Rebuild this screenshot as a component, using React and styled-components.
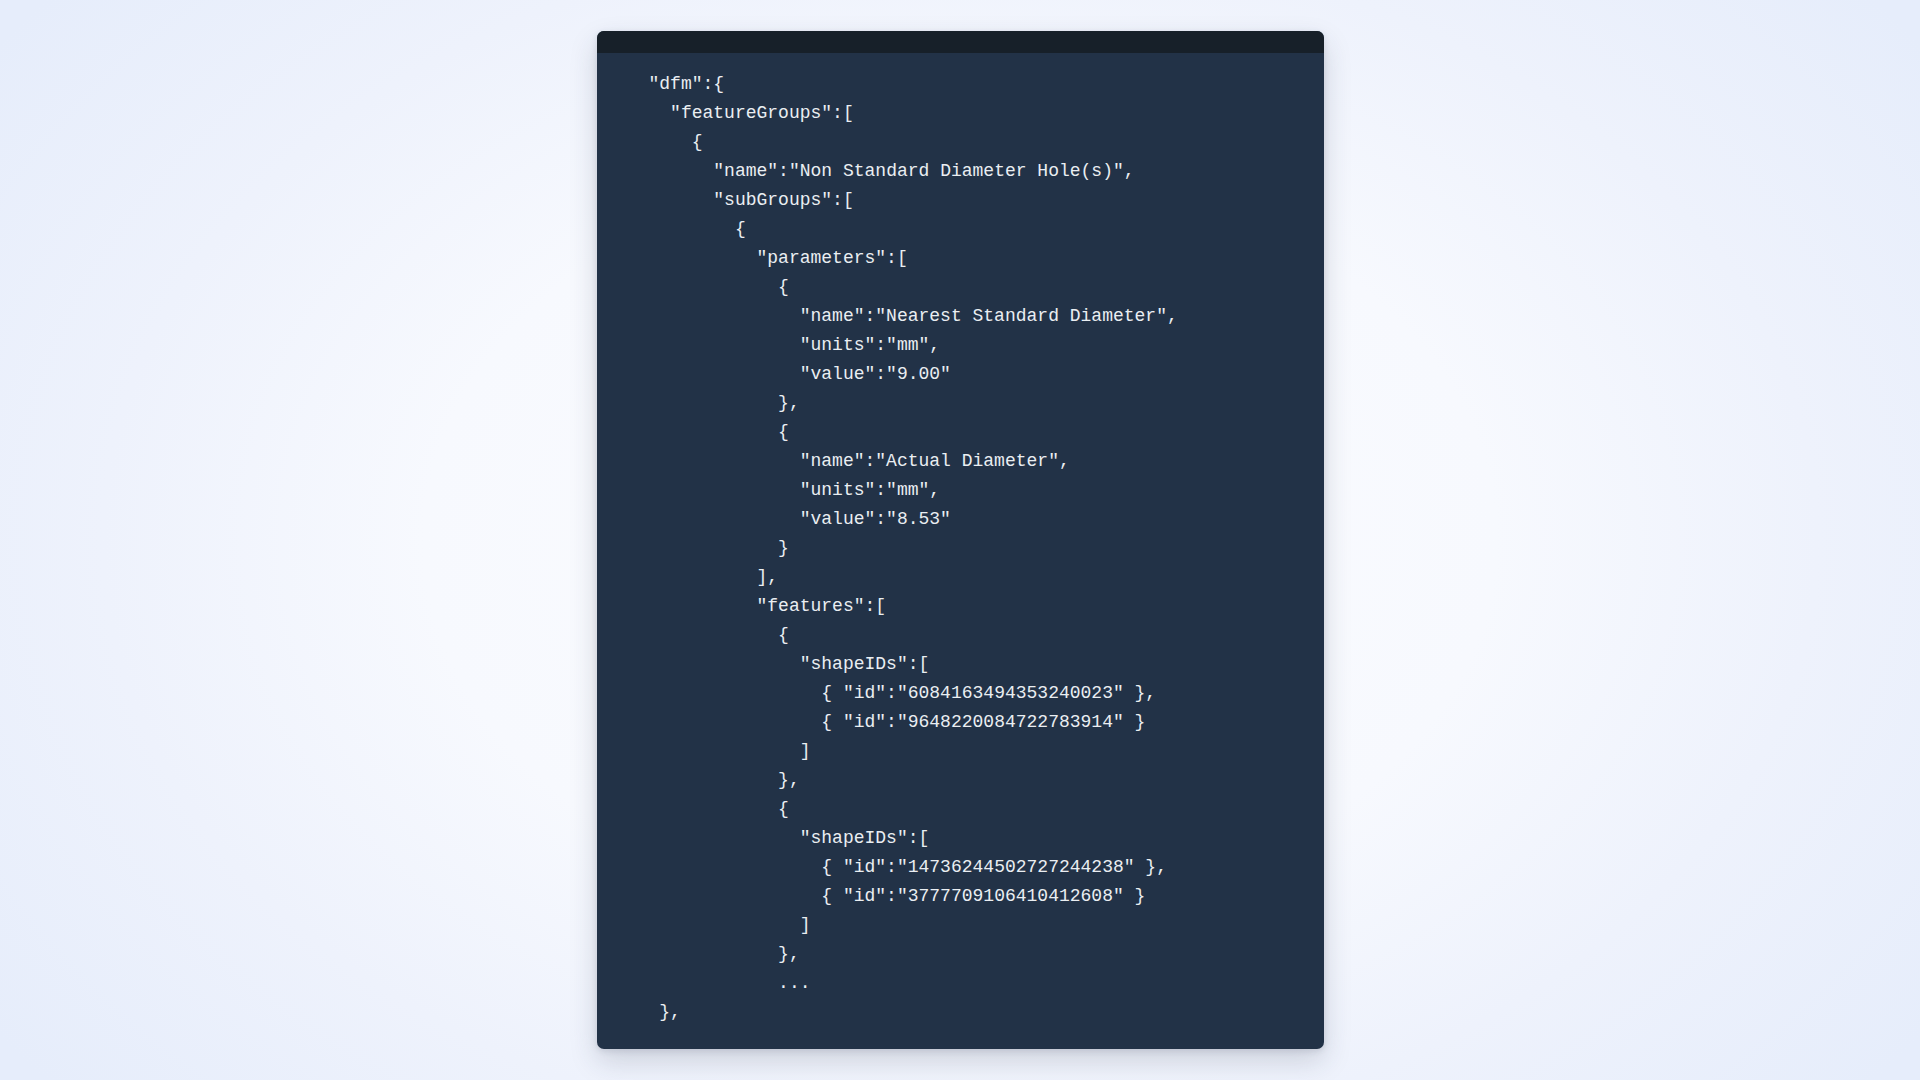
import React from "react";
import styled, { createGlobalStyle } from "styled-components";

const GlobalStyle = createGlobalStyle`
  html, body {
    margin: 0;
    padding: 0;
  }
  body {
    background: #e6edfb;
  }
`;

const Page = styled.div`
  width: 1920px;
  height: 1080px;
  box-sizing: border-box;
  padding-top: 31px;
  display: flex;
  justify-content: center;
  align-items: flex-start;
  background: radial-gradient(
    ellipse 62% 78% at 50% 50%,
    #fbfcff 0%,
    #f7f9fe 45%,
    #eef2fc 72%,
    #e6edfb 100%
  );
`;

const Card = styled.div`
  width: 727px;
  height: 1018px;
  display: flex;
  flex-direction: column;
  background: #223247;
  border-radius: 7px;
  overflow: hidden;
  box-shadow: 0 12px 28px rgba(40, 50, 70, 0.18), 0 2px 6px rgba(40, 50, 70, 0.12);
`;

const TitleBar = styled.div`
  height: 22px;
  flex-shrink: 0;
  background: #172029;
`;

const Code = styled.pre`
  margin: 0;
  padding: 17px 0 0 52px;
  font-family: "Liberation Mono", "Courier New", monospace;
  font-size: 18px;
  line-height: 29px;
  color: #eaeef2;
  white-space: pre;
`;

const Line = styled.div`
  padding-left: ${(p) => p.$indent * 10.8}px;
`;

const lines = [
  [0, '"dfm":{'],
  [2, '"featureGroups":['],
  [4, "{"],
  [6, '"name":"Non Standard Diameter Hole(s)",'],
  [6, '"subGroups":['],
  [8, "{"],
  [10, '"parameters":['],
  [12, "{"],
  [14, '"name":"Nearest Standard Diameter",'],
  [14, '"units":"mm",'],
  [14, '"value":"9.00"'],
  [12, "},"],
  [12, "{"],
  [14, '"name":"Actual Diameter",'],
  [14, '"units":"mm",'],
  [14, '"value":"8.53"'],
  [12, "}"],
  [10, "],"],
  [10, '"features":['],
  [12, "{"],
  [14, '"shapeIDs":['],
  [16, '{ "id":"6084163494353240023" },'],
  [16, '{ "id":"9648220084722783914" }'],
  [14, "]"],
  [12, "},"],
  [12, "{"],
  [14, '"shapeIDs":['],
  [16, '{ "id":"14736244502727244238" },'],
  [16, '{ "id":"3777709106410412608" }'],
  [14, "]"],
  [12, "},"],
  [12, "..."],
  [1, "},"],
];

const App = () => (
  <>
    <GlobalStyle />
    <Page>
      <Card>
        <TitleBar />
        <Code>
          {lines.map(([indent, text], i) => (
            <Line key={i} $indent={indent}>
              {text}
            </Line>
          ))}
        </Code>
      </Card>
    </Page>
  </>
);

export default App;
